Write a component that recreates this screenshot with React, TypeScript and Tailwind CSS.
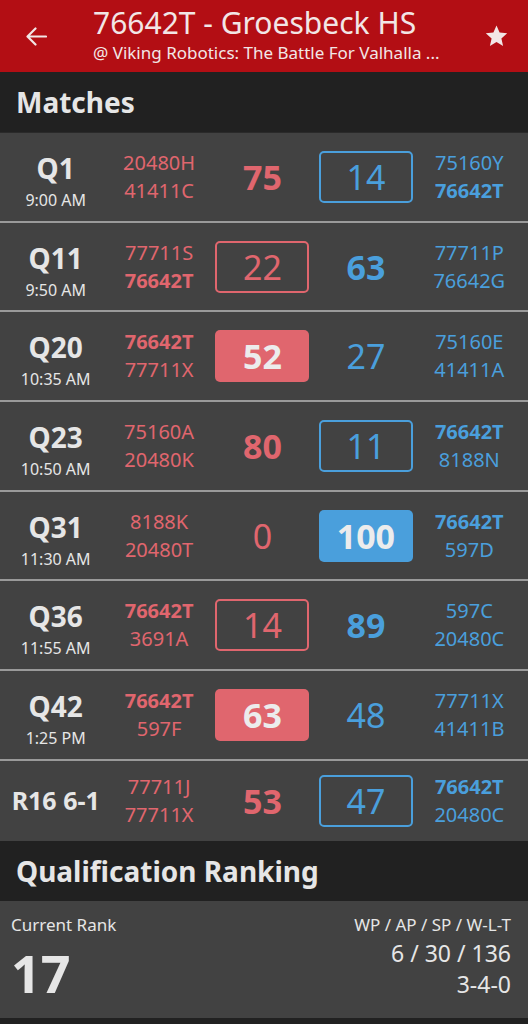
import React from 'react';

type Match = {
  label: string;
  time?: string;
  red: [string, string];
  blue: [string, string];
  redScore: number;
  blueScore: number;
};

const TEAM = '76642T';

const matches: Match[] = [
  { label: 'Q1', time: '9:00 AM', red: ['20480H', '41411C'], blue: ['75160Y', '76642T'], redScore: 75, blueScore: 14 },
  { label: 'Q11', time: '9:50 AM', red: ['77711S', '76642T'], blue: ['77711P', '76642G'], redScore: 22, blueScore: 63 },
  { label: 'Q20', time: '10:35 AM', red: ['76642T', '77711X'], blue: ['75160E', '41411A'], redScore: 52, blueScore: 27 },
  { label: 'Q23', time: '10:50 AM', red: ['75160A', '20480K'], blue: ['76642T', '8188N'], redScore: 80, blueScore: 11 },
  { label: 'Q31', time: '11:30 AM', red: ['8188K', '20480T'], blue: ['76642T', '597D'], redScore: 0, blueScore: 100 },
  { label: 'Q36', time: '11:55 AM', red: ['76642T', '3691A'], blue: ['597C', '20480C'], redScore: 14, blueScore: 89 },
  { label: 'Q42', time: '1:25 PM', red: ['76642T', '597F'], blue: ['77711X', '41411B'], redScore: 63, blueScore: 48 },
  { label: 'R16 6-1', red: ['77711J', '77711X'], blue: ['76642T', '20480C'], redScore: 53, blueScore: 47 },
];

const Score = ({ value, color, ours, won }: { value: number; color: 'red' | 'blue'; ours: boolean; won: boolean }) => {
  const isRed = color === 'red';
  let cls = 'w-[94px] h-[52px] rounded-[5px] flex items-center justify-center text-[34px] leading-none ';
  if (ours && won) {
    cls += (isRed ? 'bg-[#e0666e]' : 'bg-[#4a9fdc]') + ' text-[#ececec] font-bold';
  } else if (ours) {
    cls += isRed ? 'border-2 border-[#e0666e] text-[#e0666e]' : 'border-2 border-[#4a9fdc] text-[#4a9fdc]';
  } else {
    cls += (isRed ? 'text-[#e0666e]' : 'text-[#4a9fdc]') + (won ? ' font-bold' : '');
  }
  return <div className={cls}>{value}</div>;
};

const Teams = ({ teams, color }: { teams: [string, string]; color: 'red' | 'blue' }) => (
  <div className={`flex flex-col items-center text-[20px] leading-[28px] ${color === 'red' ? 'text-[#e0666e]' : 'text-[#4a9fdc]'}`}>
    {teams.map((t) => (
      <span key={t} className={t === TEAM ? 'font-bold' : ''}>{t}</span>
    ))}
  </div>
);

const MatchRow = ({ m, last }: { m: Match; last: boolean }) => {
  const ourRed = m.red.includes(TEAM);
  const redWon = m.redScore > m.blueScore;
  return (
    <div
      className={`grid grid-cols-5 items-center pl-[4px] pr-[7px] bg-[#424242] ${
        last ? 'h-[80px]' : 'h-[89.7px] border-b-2 border-[#9a9a9a]'
      }`}
    >
      <div className="flex flex-col items-center text-[#e6e6e6]">
        {m.time ? (
          <div className="flex flex-col items-center mt-[10px]">
            <span className="text-[28px] font-bold leading-[36px]">{m.label}</span>
            <span className="text-[16px] leading-[28px]">{m.time}</span>
          </div>
        ) : (
          <span className="text-[25px] font-bold whitespace-nowrap">{m.label}</span>
        )}
      </div>
      <Teams teams={m.red} color="red" />
      <div className="flex justify-center">
        <Score value={m.redScore} color="red" ours={ourRed} won={redWon} />
      </div>
      <div className="flex justify-center">
        <Score value={m.blueScore} color="blue" ours={!ourRed} won={!redWon} />
      </div>
      <Teams teams={m.blue} color="blue" />
    </div>
  );
};

const SectionTitle = ({ children }: { children: React.ReactNode }) => (
  <div className="h-[60px] bg-[#212121] flex items-center px-4">
    <h2 className="text-[28px] font-bold text-[#e6e6e6]">{children}</h2>
  </div>
);

export default function App() {
  return (
    <div className="w-[528px] h-[1024px] bg-[#212121] overflow-hidden" style={{ fontFamily: '"Noto Sans", "Open Sans", sans-serif' }}>
      {/* Top bar */}
      <header className="h-[72px] bg-[#b30e14] flex items-center text-[#f2e6e6]">
        <div className="w-[93px] flex items-center pl-[26px]">
          <svg width="21" height="19" viewBox="0 0 21 19" fill="none" stroke="currentColor" strokeWidth="2.2" strokeLinecap="round" strokeLinejoin="round">
            <path d="M20 9.5H2M9.5 1.5L1.5 9.5l8 8" />
          </svg>
        </div>
        <div className="flex-1 min-w-0 flex flex-col -mt-[4px]">
          <span className="text-[30px] leading-[38px] whitespace-nowrap">76642T - Groesbeck HS</span>
          <span className="text-[17px] leading-[22px] whitespace-nowrap">@ Viking Robotics: The Battle For Valhalla ...</span>
        </div>
        <div className="pr-[19px] flex items-center">
          <svg width="25" height="24" viewBox="0 0 24 24" fill="currentColor">
            <path d="M12 1.5l3.1 7.1 7.6.7-5.8 5.1 1.7 7.6L12 18l-6.6 4 1.7-7.6-5.8-5.1 7.6-.7z" />
          </svg>
        </div>
      </header>

      <SectionTitle>Matches</SectionTitle>
      <div className="h-px bg-[#2a2a2a]" />
      {matches.map((m, i) => (
        <MatchRow key={m.label} m={m} last={i === matches.length - 1} />
      ))}

      <SectionTitle>Qualification Ranking</SectionTitle>
      <div className="h-[117px] bg-[#424242] flex justify-between px-[11px] pt-[12px] text-[#e6e6e6]">
        <div className="flex flex-col">
          <span className="text-[17px] leading-[24px]">Current Rank</span>
          <span className="text-[52px] font-bold leading-[60px] mt-[6px]">17</span>
        </div>
        <div className="flex flex-col items-end pr-[6px]">
          <span className="text-[17px] leading-[24px]">WP / AP / SP / W-L-T</span>
          <span className="text-[23px] leading-[31px] mt-[1px]">6 / 30 / 136</span>
          <span className="text-[23px] leading-[31px]">3-4-0</span>
        </div>
      </div>
    </div>
  );
}
